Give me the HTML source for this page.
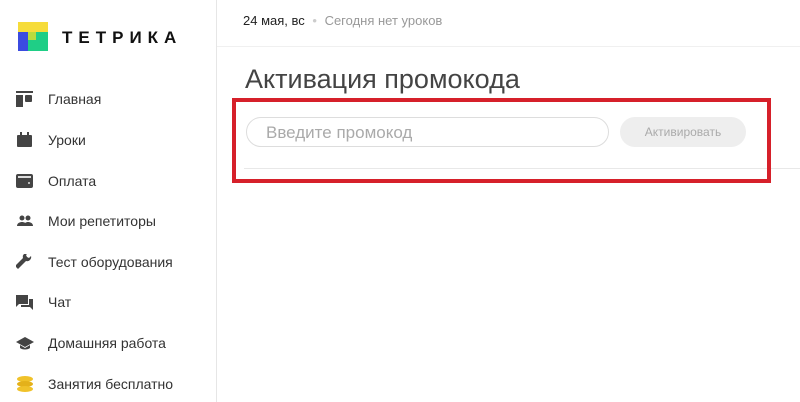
<!DOCTYPE html>
<html><head><meta charset="utf-8"><style>
*{margin:0;padding:0;box-sizing:border-box}
body{width:800px;height:402px;overflow:hidden;background:#fff;font-family:"Liberation Sans",sans-serif;position:relative}
.sb{position:absolute;left:0;top:0;width:217px;height:402px;border-right:1px solid #e6e6e6}
.logo{position:absolute;left:18px;top:22px;width:30px;height:29px}
.brand{position:absolute;left:62px;top:28px;font-size:17px;font-weight:bold;letter-spacing:6px;color:#111}
.it{position:absolute;left:48px;font-size:14px;color:#333}
.ic{position:absolute;left:16px;width:18px;height:16px}
.hdr{position:absolute;left:217px;top:0;right:0;height:47px;border-bottom:1px solid #f0f0f0}
</style></head><body>
<div class="sb">
<svg class="logo" viewBox="0 0 30 29"><rect x="0" y="0" width="30" height="10" fill="#f6dc3a"/><rect x="0" y="10" width="10" height="19" fill="#3b4be0"/><rect x="10" y="10" width="20" height="19" fill="#1fce86"/><rect x="10" y="10" width="8" height="8" fill="#b9db3e"/></svg>
<div class="brand">ТЕТРИКА</div>
<svg class="ic" style="top:91px" viewBox="0 0 18 16"><rect x="0" y="0" width="17" height="2" fill="#444"/><rect x="0" y="4" width="7" height="12" fill="#444"/><rect x="9" y="4" width="7" height="7" rx="1" fill="#444"/></svg>
<div class="it" style="top:91px">Главная</div>
<svg class="ic" style="top:132px" viewBox="0 0 18 16"><rect x="1" y="3" width="15" height="12" rx="1" fill="#444"/><rect x="4" y="0" width="2" height="4" fill="#444"/><rect x="11" y="0" width="2" height="4" fill="#444"/></svg>
<div class="it" style="top:132px">Уроки</div>
<svg class="ic" style="top:173px" viewBox="0 0 18 16"><rect x="0" y="1" width="17" height="14" rx="2" fill="#444"/><rect x="2" y="3" width="13" height="2" fill="#ddd"/><circle cx="13" cy="10" r="1" fill="#ddd"/></svg>
<div class="it" style="top:173px">Оплата</div>
<svg class="ic" style="top:213px" viewBox="0 0 18 16"><circle cx="6" cy="5" r="2.5" fill="#444"/><circle cx="12" cy="5" r="2.5" fill="#444"/><path d="M1 13c0-3 3-4 5-4s5 1 5 4zM8 13c0-3 2-4 4-4s5 1 5 4z" fill="#444"/></svg>
<div class="it" style="top:213px">Мои репетиторы</div>
<svg class="ic" style="top:254px" viewBox="0 0 18 16"><path d="M2 15l8-8a4 4 0 0 0 5-5l-2 2-2-1-1-2 2-2a4 4 0 0 0-5 5l-8 8z" fill="#444"/></svg>
<div class="it" style="top:254px">Тест оборудования</div>
<svg class="ic" style="top:294px" viewBox="0 0 18 16"><rect x="0" y="1" width="12" height="9" fill="#444"/><path d="M0 10v3l3-3z" fill="#444"/><path d="M13 5h4v11l-3-3H5v-2h8z" fill="#444"/></svg>
<div class="it" style="top:294px">Чат</div>
<svg class="ic" style="top:335px" viewBox="0 0 18 16"><path d="M9 2L0 7l9 5 9-5z" fill="#444"/><path d="M4 10v3c2 2 8 2 10 0v-3l-5 3z" fill="#444"/></svg>
<div class="it" style="top:335px">Домашняя работа</div>
<svg class="ic" style="top:376px" viewBox="0 0 18 16"><ellipse cx="9" cy="3" rx="8" ry="3" fill="#f0c22a"/><ellipse cx="9" cy="8" rx="8" ry="3" fill="#e4b11a"/><ellipse cx="9" cy="13" rx="8" ry="3" fill="#f0c22a"/></svg>
<div class="it" style="top:376px">Занятия бесплатно</div>
</div>
<div class="hdr"></div>
<div style="position:absolute;left:243px;top:13px;font-size:13px;color:#222">24 мая, вс <span style="color:#ccc;margin:0 4px">•</span> <span style="color:#999">Сегодня нет уроков</span></div>
<div style="position:absolute;left:245px;top:64px;font-size:27px;color:#444">Активация промокода</div>
<div style="position:absolute;left:244px;top:168px;right:0;height:1px;background:#e8e8e8"></div>
<div style="position:absolute;left:246px;top:117px;width:363px;height:30px;border:1px solid #ddd;border-radius:15px;font-size:17px;color:#aaa;padding:5px 0 0 19px">Введите промокод</div>
<div style="position:absolute;left:620px;top:117px;width:126px;height:30px;background:#eee;border-radius:15px;font-size:12px;color:#aaa;text-align:center;line-height:30px">Активировать</div>
<div style="position:absolute;left:232px;top:98px;width:539px;height:85px;border:4px solid #d6202a"></div>
</body></html>
